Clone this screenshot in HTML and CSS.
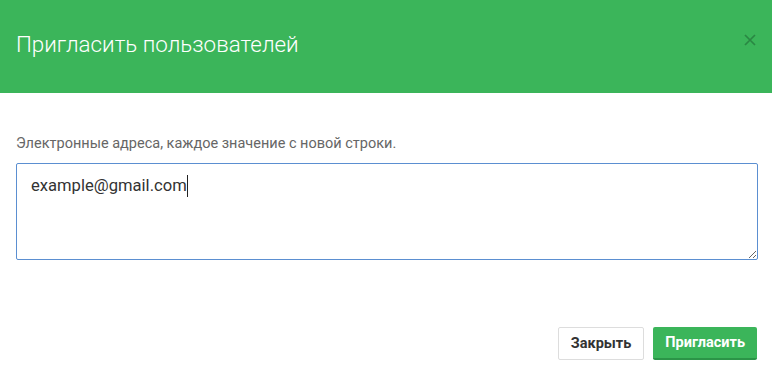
FILE: index.html
```html
<!DOCTYPE html>
<html lang="ru">
<head>
    <meta charset="UTF-8">
    <meta name="viewport" content="width=device-width, initial-scale=1.0">
    <title>Пригласить пользователей</title>
    <link rel="stylesheet" href="styles.css">
</head>
<body>
    <div class="modal">
        <div class="modal-header">
            <h4 class="modal-title">Пригласить пользователей</h4>
            <button class="close-btn" type="button">
                <svg width="12" height="12" viewBox="0 0 12 12">
                    <path d="M1 1 L11 11 M11 1 L1 11" stroke="#2a8743" stroke-width="1.7" fill="none"/>
                </svg>
            </button>
        </div>
        <div class="modal-body">
            <label class="field-label">Электронные адреса, каждое значение с новой строки.</label>
            <div class="emails">example@gmail.com<span class="caret"></span></div>
        </div>
        <div class="modal-footer">
            <button class="btn btn-default" type="button">Закрыть</button>
            <button class="btn btn-success" type="button">Пригласить</button>
        </div>
    </div>
</body>
</html>
```

FILE: styles.css
```css
body {
    margin: 0;
    background: #ffffff;
    font-family: Roboto, "Liberation Sans", Arial, sans-serif;
}

.modal {
    width: 772px;
    height: 373px;
    display: flex;
    flex-direction: column;
}

.modal-header {
    height: 93px;
    background: #3bb55a;
    display: flex;
    align-items: center;
    justify-content: space-between;
    padding: 0 14px 0 16px;
    box-sizing: border-box;
}

.modal-title {
    margin: 0 0 6px 0;
    font-size: 22.4px;
    font-weight: 300;
    color: #ffffff;
}

.close-btn {
    background: none;
    border: none;
    padding: 0;
    margin-bottom: 14px;
    width: 16px;
    height: 16px;
    display: flex;
    align-items: center;
    justify-content: center;
    cursor: pointer;
}

.modal-body {
    padding: 42px 14px 0 16px;
}

.field-label {
    display: block;
    font-size: 14.5px;
    color: #666666;
    margin-bottom: 11px;
}

.emails {
    border: 1px solid #5b8fd1;
    border-radius: 2px;
    padding: 11px 14px;
    box-sizing: border-box;
    height: 97px;
    font-size: 16.6px;
    color: #333333;
    resize: vertical;
    overflow: auto;
}

.caret {
    display: inline-block;
    width: 1px;
    height: 22px;
    background: #222222;
    vertical-align: -6px;
}

.modal-footer {
    margin-top: auto;
    display: flex;
    justify-content: flex-end;
    gap: 9px;
    padding: 0 15px 13px 0;
}

.btn {
    height: 33px;
    padding: 0 12px;
    font-family: Roboto, "Liberation Sans", Arial, sans-serif;
    font-size: 14.5px;
    font-weight: bold;
    border-radius: 2px;
    cursor: pointer;
}

.btn-default {
    background: #ffffff;
    color: #333333;
    border: 1px solid #dddddd;
}

.btn-success {
    background: #3bb55a;
    color: #ffffff;
    border: none;
    border-bottom: 2px solid #2b9447;
}
```
